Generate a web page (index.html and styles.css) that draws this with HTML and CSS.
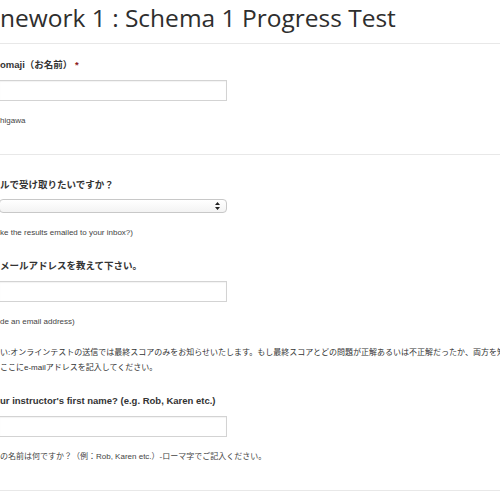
FILE: index.html
```html
<!DOCTYPE html>
<html>
<head>
  <title>Homework 1 : Schema 1 Progress Test</title>
  <link rel="stylesheet" href="styles.css">
</head>
<body>
  <div class="page">
    <h1 class="title">nework 1 : Schema 1 Progress Test</h1>

    <form class="form">
      <div class="section">
        <div class="field">
          <label class="label">omaji（お名前） <span class="req">*</span></label>
          <input type="text" class="text-input">
          <p class="help">higawa</p>
        </div>
      </div>

      <div class="section">
        <div class="field">
          <label class="label">ルで受け取りたいですか？</label>
          <div class="select-box">
            <svg class="arrows" width="5" height="8" viewBox="0 0 5 8">
              <path d="M2.5 0 L5 3 L0 3 Z M0 5 L5 5 L2.5 8 Z" fill="#222"/>
            </svg>
          </div>
          <p class="help">ke the results emailed to your inbox?)</p>
        </div>

        <div class="field">
          <label class="label">メールアドレスを教えて下さい。</label>
          <input type="text" class="text-input">
          <p class="help">de an email address)</p>
        </div>

        <p class="note">い:オンラインテストの送信では最終スコアのみをお知らせいたします。もし最終スコアとどの問題が正解あるいは不正解だったか、両方を知<br>ここにe-mailアドレスを記入してください。</p>

        <div class="field">
          <label class="label">ur instructor's first name? (e.g. Rob, Karen etc.)</label>
          <input type="text" class="text-input">
          <p class="help">の名前は何ですか？（例：Rob, Karen etc.）-ローマ字でご記入ください。</p>
        </div>
      </div>
    </form>
  </div>
</body>
</html>
```

FILE: styles.css
```css
body {
  margin: 0;
  background: #fff;
  color: #333;
  font-family: "Liberation Sans", Arial, "Noto Sans CJK JP", sans-serif;
  overflow: hidden;
}
.page {
  width: 500px;
}
.title {
  margin: 0;
  padding: 2px 0 0 0;
  height: 41px;
  font-family: "Open Sans", "DejaVu Sans", sans-serif;
  font-weight: normal;
  font-size: 24.5px;
  line-height: 32px;
  color: #2e2e2e;
  white-space: nowrap;
  border-bottom: 1px solid #e8e8e8;
}
.form {
  margin: 0;
}
.section {
  border-bottom: 1px solid #e8e8e8;
  padding: 14px 0 27px 0;
}
.section + .section {
  padding-top: 23px;
}
.field + .field {
  margin-top: 20px;
}
.label {
  display: block;
  font-weight: bold;
  font-size: 9.5px;
  line-height: 14px;
  margin-bottom: 8px;
  white-space: nowrap;
}
.req {
  color: #8b1c1c;
}
.text-input {
  display: block;
  box-sizing: border-box;
  width: 228px;
  height: 21px;
  margin: 0 0 0 -1px;
  padding: 2px 4px;
  border: 1px solid #d3d3d3;
  border-radius: 0;
  box-shadow: inset 0 1px 1px rgba(0, 0, 0, 0.05);
  font-size: 11px;
}
.select-box {
  box-sizing: border-box;
  width: 228px;
  height: 14px;
  margin: -1px 0 1px -1px;
  border: 1px solid #c8c8c8;
  border-radius: 4px;
  position: relative;
  background: linear-gradient(#fff, #f3f3f3);
}
.arrows {
  position: absolute;
  right: 6px;
  top: 2px;
}
.help {
  margin: 14px 0 0 0;
  font-size: 8px;
  line-height: 12px;
  color: #444;
  white-space: nowrap;
}
.note {
  margin: 17px 0 0 0;
  font-size: 8px;
  line-height: 15px;
  color: #333;
  white-space: nowrap;
}
.note + .field {
  margin-top: 19px;
}
```
